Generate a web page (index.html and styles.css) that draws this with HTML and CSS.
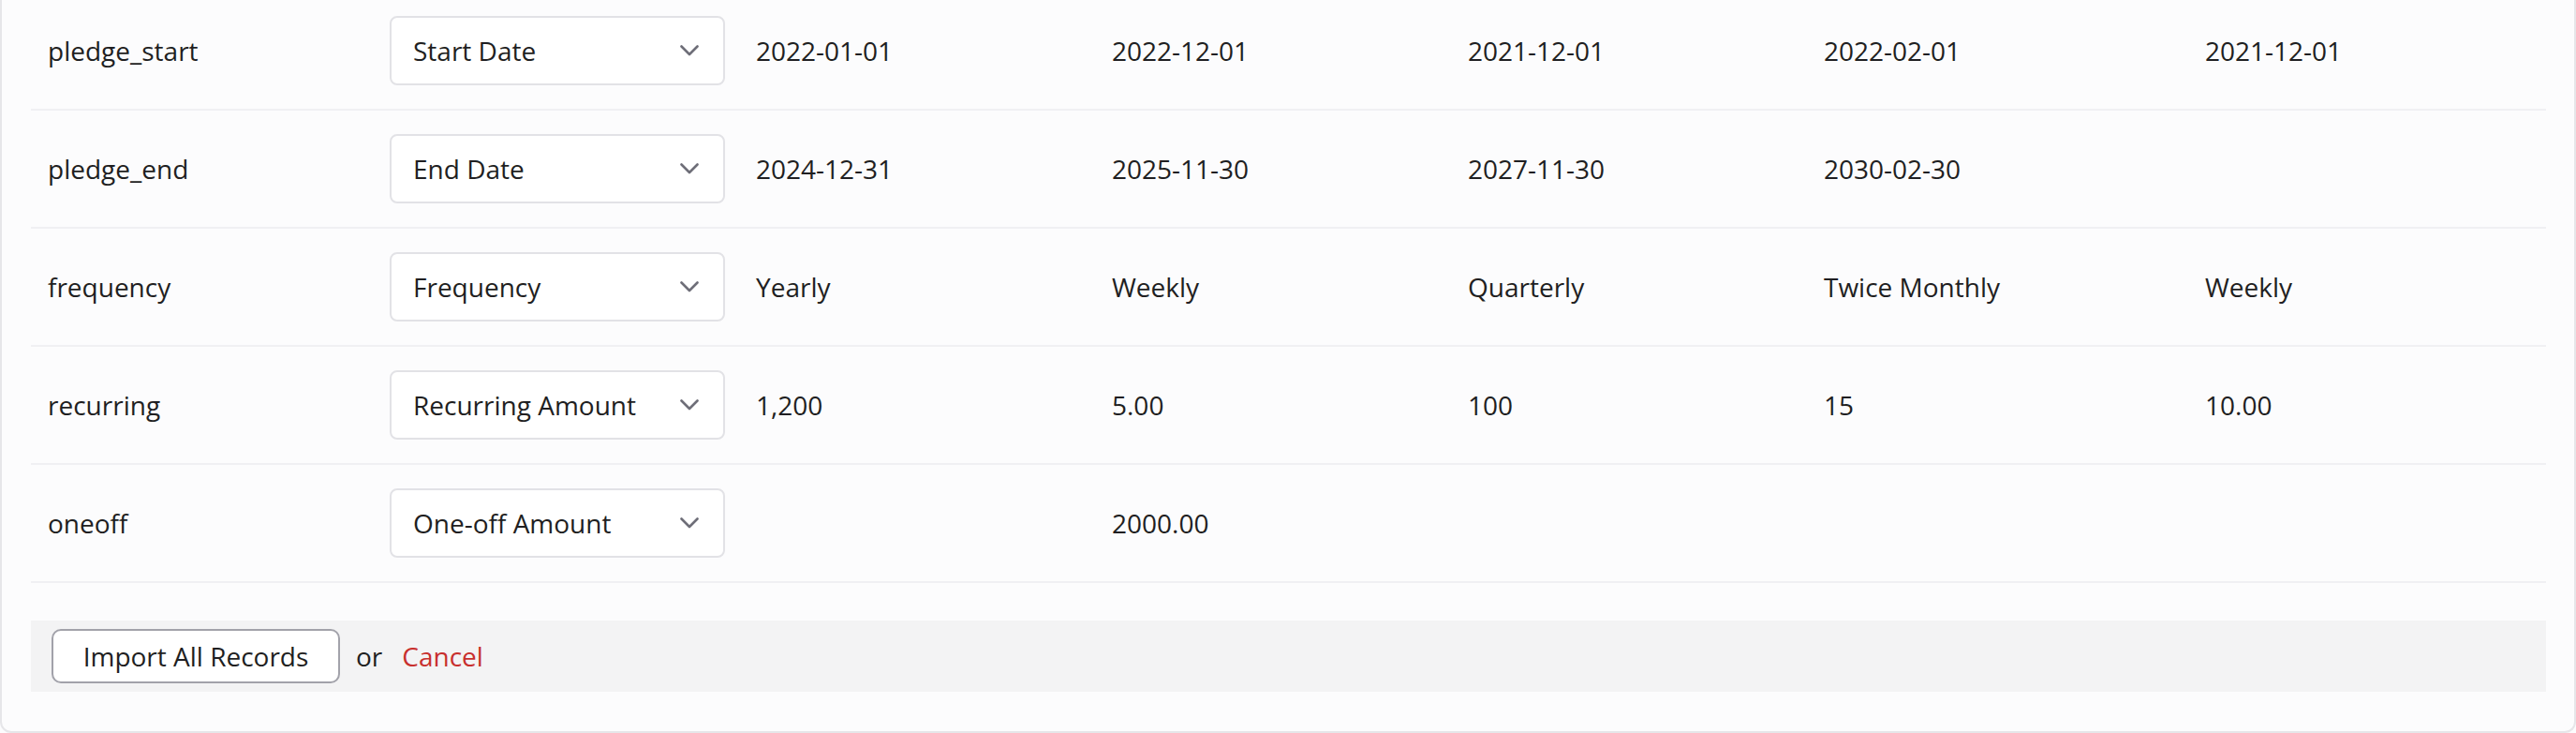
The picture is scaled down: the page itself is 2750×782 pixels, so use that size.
FILE: index.html
```html
<!DOCTYPE html>
<html lang="en">
<head>
<meta charset="utf-8">
<title>Import mapping</title>
<link rel="stylesheet" href="styles.css">
</head>
<body>
<div class="card">
  <div class="rows">
    <div class="row">
      <div class="cell name">pledge_start</div>
      <div class="cell pick"><div class="select"><span>Start Date</span><svg class="chev" viewBox="0 0 20 12" width="20" height="12"><path d="M1.5 1.5 L10 10 L18.5 1.5"/></svg></div></div>
      <div class="cell val">2022-01-01</div>
      <div class="cell val">2022-12-01</div>
      <div class="cell val">2021-12-01</div>
      <div class="cell val">2022-02-01</div>
      <div class="cell val">2021-12-01</div>
    </div>
    <div class="row">
      <div class="cell name">pledge_end</div>
      <div class="cell pick"><div class="select"><span>End Date</span><svg class="chev" viewBox="0 0 20 12" width="20" height="12"><path d="M1.5 1.5 L10 10 L18.5 1.5"/></svg></div></div>
      <div class="cell val">2024-12-31</div>
      <div class="cell val">2025-11-30</div>
      <div class="cell val">2027-11-30</div>
      <div class="cell val">2030-02-30</div>
      <div class="cell val"></div>
    </div>
    <div class="row">
      <div class="cell name">frequency</div>
      <div class="cell pick"><div class="select"><span>Frequency</span><svg class="chev" viewBox="0 0 20 12" width="20" height="12"><path d="M1.5 1.5 L10 10 L18.5 1.5"/></svg></div></div>
      <div class="cell val">Yearly</div>
      <div class="cell val">Weekly</div>
      <div class="cell val">Quarterly</div>
      <div class="cell val">Twice Monthly</div>
      <div class="cell val">Weekly</div>
    </div>
    <div class="row">
      <div class="cell name">recurring</div>
      <div class="cell pick"><div class="select"><span>Recurring Amount</span><svg class="chev" viewBox="0 0 20 12" width="20" height="12"><path d="M1.5 1.5 L10 10 L18.5 1.5"/></svg></div></div>
      <div class="cell val">1,200</div>
      <div class="cell val">5.00</div>
      <div class="cell val">100</div>
      <div class="cell val">15</div>
      <div class="cell val">10.00</div>
    </div>
    <div class="row">
      <div class="cell name">oneoff</div>
      <div class="cell pick"><div class="select"><span>One-off Amount</span><svg class="chev" viewBox="0 0 20 12" width="20" height="12"><path d="M1.5 1.5 L10 10 L18.5 1.5"/></svg></div></div>
      <div class="cell val"></div>
      <div class="cell val">2000.00</div>
      <div class="cell val"></div>
      <div class="cell val"></div>
      <div class="cell val"></div>
    </div>
  </div>
  <div class="footer">
    <button class="btn" type="button">Import All Records</button>
    <span class="or">or</span>
    <a class="cancel" href="#">Cancel</a>
  </div>
</div>
</body>
</html>
```
FILE: styles.css
```css
html, body {
  margin: 0;
  padding: 0;
  background: #fcfcfd;
}
body {
  font-family: "Open Sans", "Noto Sans", sans-serif;
  font-size: 28px;
  color: #1f1f22;
  overflow: hidden;
}
.card {
  margin-top: -8px;
  background: #fcfcfd;
  border: 2px solid #e6e6e9;
  border-top: none;
  border-radius: 0 0 12px 12px;
  padding: 0 30px 42px 31px;
  height: 790px;
  box-sizing: border-box;
}
.row {
  display: grid;
  grid-template-columns: 367px 390px 380px 380px 380px 407px 1fr;
  align-items: center;
  height: 126px;
  box-sizing: border-box;
  border-bottom: 2px solid #f0f0f3;
}
.cell {
  white-space: nowrap;
}
.name {
  padding-left: 18px;
}
.pick {
  padding: 0 16px;
}
.val {
  padding-left: 17px;
}
.select {
  height: 74px;
  box-sizing: border-box;
  border: 2px solid #e2e2e6;
  border-radius: 8px;
  background: #ffffff;
  display: flex;
  align-items: center;
  justify-content: space-between;
  padding: 0 26px 0 23px;
}
.chev {
  display: block;
  fill: none;
  stroke: #6e6e78;
  stroke-width: 2.6;
  stroke-linecap: round;
  stroke-linejoin: round;
}
.footer {
  margin-top: 40px;
  height: 76px;
  background: #f3f3f4;
  display: flex;
  align-items: center;
  padding-left: 22px;
}
.btn {
  height: 58px;
  width: 308px;
  box-sizing: border-box;
  border: 2px solid #a2a2aa;
  border-radius: 10px;
  background: #ffffff;
  font-family: "Open Sans", "Noto Sans", sans-serif;
  font-size: 28px;
  color: #1f1f22;
  padding: 0;
}
.or {
  margin-left: 17px;
}
.cancel {
  margin-left: 21px;
  color: #c8302e;
  text-decoration: none;
}
```
